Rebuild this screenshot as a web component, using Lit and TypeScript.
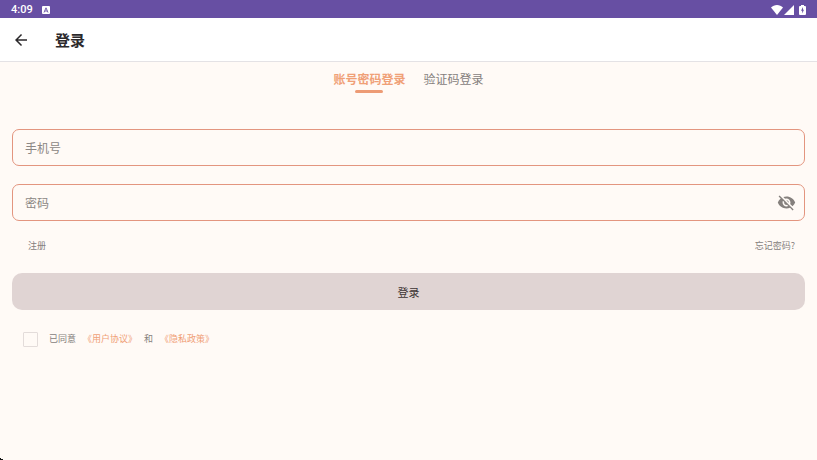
import { LitElement, html, css } from "lit";
import { customElement, state } from "lit/decorators.js";
import { classMap } from "lit/directives/class-map.js";

@customElement("status-bar")
class StatusBar extends LitElement {
  static styles = css`
    :host {
      display: flex;
      align-items: center;
      box-sizing: border-box;
      height: 18px;
      padding: 1px 11px 0;
      background: #674fa3;
      color: #fff;
      font: 500 11px/17px Roboto, sans-serif;
    }
    .badge {
      margin-left: 9px;
    }
    .icons {
      display: flex;
      align-items: center;
      margin-left: auto;
    }
    .battery {
      margin-left: 5px;
    }
    svg {
      display: block;
    }
  `;

  render() {
    return html`
      <span>4:09</span>
      <svg class="badge" width="8" height="8" viewBox="0 0 8 8" aria-hidden="true">
        <rect width="8" height="8" rx="1" fill="#fff" />
        <path d="M2 6.5 4 1.8 6 6.5M2.8 5h2.4" fill="none" stroke="#674fa3" stroke-width="0.9" />
      </svg>
      <span class="icons">
        <svg width="12" height="10" viewBox="0 0 12 10" aria-hidden="true">
          <path d="M6 10 0 2.4C1.6.9 3.7 0 6 0s4.400.9 6 2.400z" fill="#fff" />
        </svg>
        <svg width="11" height="10" viewBox="0 0 11 10" aria-hidden="true">
          <path d="M11 0v10H1z" fill="#fff" />
        </svg>
        <svg class="battery" width="7" height="10" viewBox="0 0 7 10" aria-hidden="true">
          <path d="M2 0h3v1h1q1 0 1 1v7q0 1-1 1H1q-1 0-1-1V2q0-1 1-1h1z" fill="#fff" />
          <path d="M4 2 2 5.800h1.200V8.500L5 4.800H4z" fill="#674fa3" />
        </svg>
      </span>
    `;
  }
}

@customElement("app-root")
class AppRoot extends LitElement {
  @state() private mode: "password" | "code" = "password";
  @state() private visible = false;

  static styles = css`
    :host {
      display: block;
      position: relative;
      min-height: 100vh;
      background: #fffaf6;
      color: #85807d;
      font-family: "Noto Sans CJK SC", sans-serif;
      font-size: 12px;
    }
    * {
      box-sizing: border-box;
    }
    button {
      padding: 0;
      border: 0;
      background: none;
      color: inherit;
      font: inherit;
      cursor: pointer;
    }
    svg {
      display: block;
    }
    a {
      color: inherit;
      text-decoration: none;
    }
    .app-bar {
      display: flex;
      align-items: center;
      gap: 25px;
      height: 44px;
      padding: 0 12px;
      background: #fff;
      border-bottom: 1px solid #e4e2e5;
      color: #2b292b;
    }
    h1 {
      margin: 0;
      font-size: 15px;
      font-weight: 700;
      line-height: 22px;
    }
    .tabs {
      display: flex;
      justify-content: center;
      gap: 18px;
      padding-top: 8px;
    }
    .tab {
      display: flex;
      flex-direction: column;
      align-items: center;
      gap: 2px;
      line-height: 18px;
    }
    .tab::after {
      content: "";
      width: 28px;
      height: 3px;
      border-radius: 2px;
    }
    .tab.active {
      color: #f0a077;
      font-weight: 700;
    }
    .tab.active::after {
      background: #ed9b75;
    }
    form {
      padding: 36px 12px 0;
    }
    .field {
      display: flex;
      align-items: center;
      height: 37px;
      margin-bottom: 18px;
      padding: 0 8px 0 12px;
      border: 1px solid #e3957f;
      border-radius: 7px;
    }
    .field input {
      flex: 1;
      min-width: 0;
      height: 100%;
      padding: 0;
      border: 0;
      outline: 0;
      background: none;
      color: #2b292b;
      font: inherit;
    }
    .field input::placeholder {
      color: #8c8784;
      opacity: 1;
    }
    .links {
      display: flex;
      justify-content: space-between;
      padding: 0 10px 0 16px;
      font-size: 9px;
      line-height: 14px;
    }
    .submit {
      display: block;
      width: 100%;
      height: 37px;
      margin-top: 20px;
      border-radius: 10px;
      background: #e0d4d3;
      color: #3d3434;
      font-size: 11px;
    }
    .agree {
      display: flex;
      align-items: center;
      gap: 7px;
      margin-top: 21px;
      padding-left: 11px;
      font-size: 9px;
      line-height: 16px;
    }
    .agree label {
      display: flex;
      align-items: center;
      gap: 11px;
    }
    .agree input {
      appearance: none;
      width: 15px;
      height: 15px;
      margin: 0;
      border: 1px solid #e3dcda;
      border-radius: 1px;
    }
    .agree input:checked {
      background: #ed9b75;
    }
    .agree a {
      color: #f0a077;
    }
    .pointer {
      position: absolute;
      left: 0;
      bottom: 0;
    }
  `;

  private tab(mode: "password" | "code", label: string) {
    const active = this.mode === mode;
    return html`<button
      class=${classMap({ tab: true, active })}
      role="tab"
      aria-selected=${active}
      @click=${() => (this.mode = mode)}
    >${label}</button>`;
  }

  render() {
    return html`
      <status-bar></status-bar>
      <header class="app-bar">
        <button aria-label="返回">
          <svg width="18" height="18" viewBox="0 0 24 24">
            <path d="M20 11H7.830l5.590-5.590L12 4l-8 8 8 8 1.410-1.410L7.830 13H20z" fill="currentColor" />
          </svg>
        </button>
        <h1>登录</h1>
      </header>
      <div class="tabs" role="tablist">
        ${this.tab("password", "账号密码登录")} ${this.tab("code", "验证码登录")}
      </div>
      <form @submit=${(e: Event) => e.preventDefault()}>
        <div class="field">
          <input type="tel" placeholder="手机号" aria-label="手机号" />
        </div>
        <div class="field">
          <input type=${this.visible ? "text" : "password"} placeholder="密码" aria-label="密码" />
          <button type="button" aria-label="显示密码" @click=${() => (this.visible = !this.visible)}>
            <svg width="19" height="19" viewBox="0 0 24 24">
              <path
                fill="#85807d"
                d="M12 7c2.760 0 5 2.240 5 5 0 .65-.13 1.260-.36 1.830l2.920 2.920c1.510-1.260 2.700-2.890 3.430-4.750-1.730-4.390-6-7.500-11-7.500-1.400 0-2.740.25-3.980.7l2.160 2.160C10.740 7.130 11.350 7 12 7zM2 4.270l2.280 2.280.46.46C3.080 8.300 1.780 10.020 1 12c1.730 4.390 6 7.500 11 7.500 1.550 0 3.030-.3 4.380-.84l.42.42L19.730 22 21 20.730 3.270 3 2 4.270zM7.530 9.800l1.550 1.550c-.05.21-.08.43-.08.65 0 1.660 1.340 3 3 3 .22 0 .44-.03.65-.08l1.550 1.550c-.67.33-1.410.53-2.200.53-2.760 0-5-2.240-5-5 0-.79.2-1.530.53-2.200zm4.310-.78 3.150 3.150.02-.16c0-1.660-1.340-3-3-3l-.17.01z"
              />
            </svg>
          </button>
        </div>
        <div class="links">
          <a href="#register">注册</a>
          <a href="#forgot">忘记密码?</a>
        </div>
        <button class="submit">登录</button>
        <div class="agree">
          <label><input type="checkbox" />已同意</label>
          <a href="#terms">《用户协议》</a>
          <span>和</span>
          <a href="#privacy">《隐私政策》</a>
        </div>
      </form>
      <svg class="pointer" width="3" height="2" viewBox="0 0 3 2" aria-hidden="true">
        <path d="M0 0h1v1h2v1H0z" fill="#111" />
      </svg>
    `;
  }
}
